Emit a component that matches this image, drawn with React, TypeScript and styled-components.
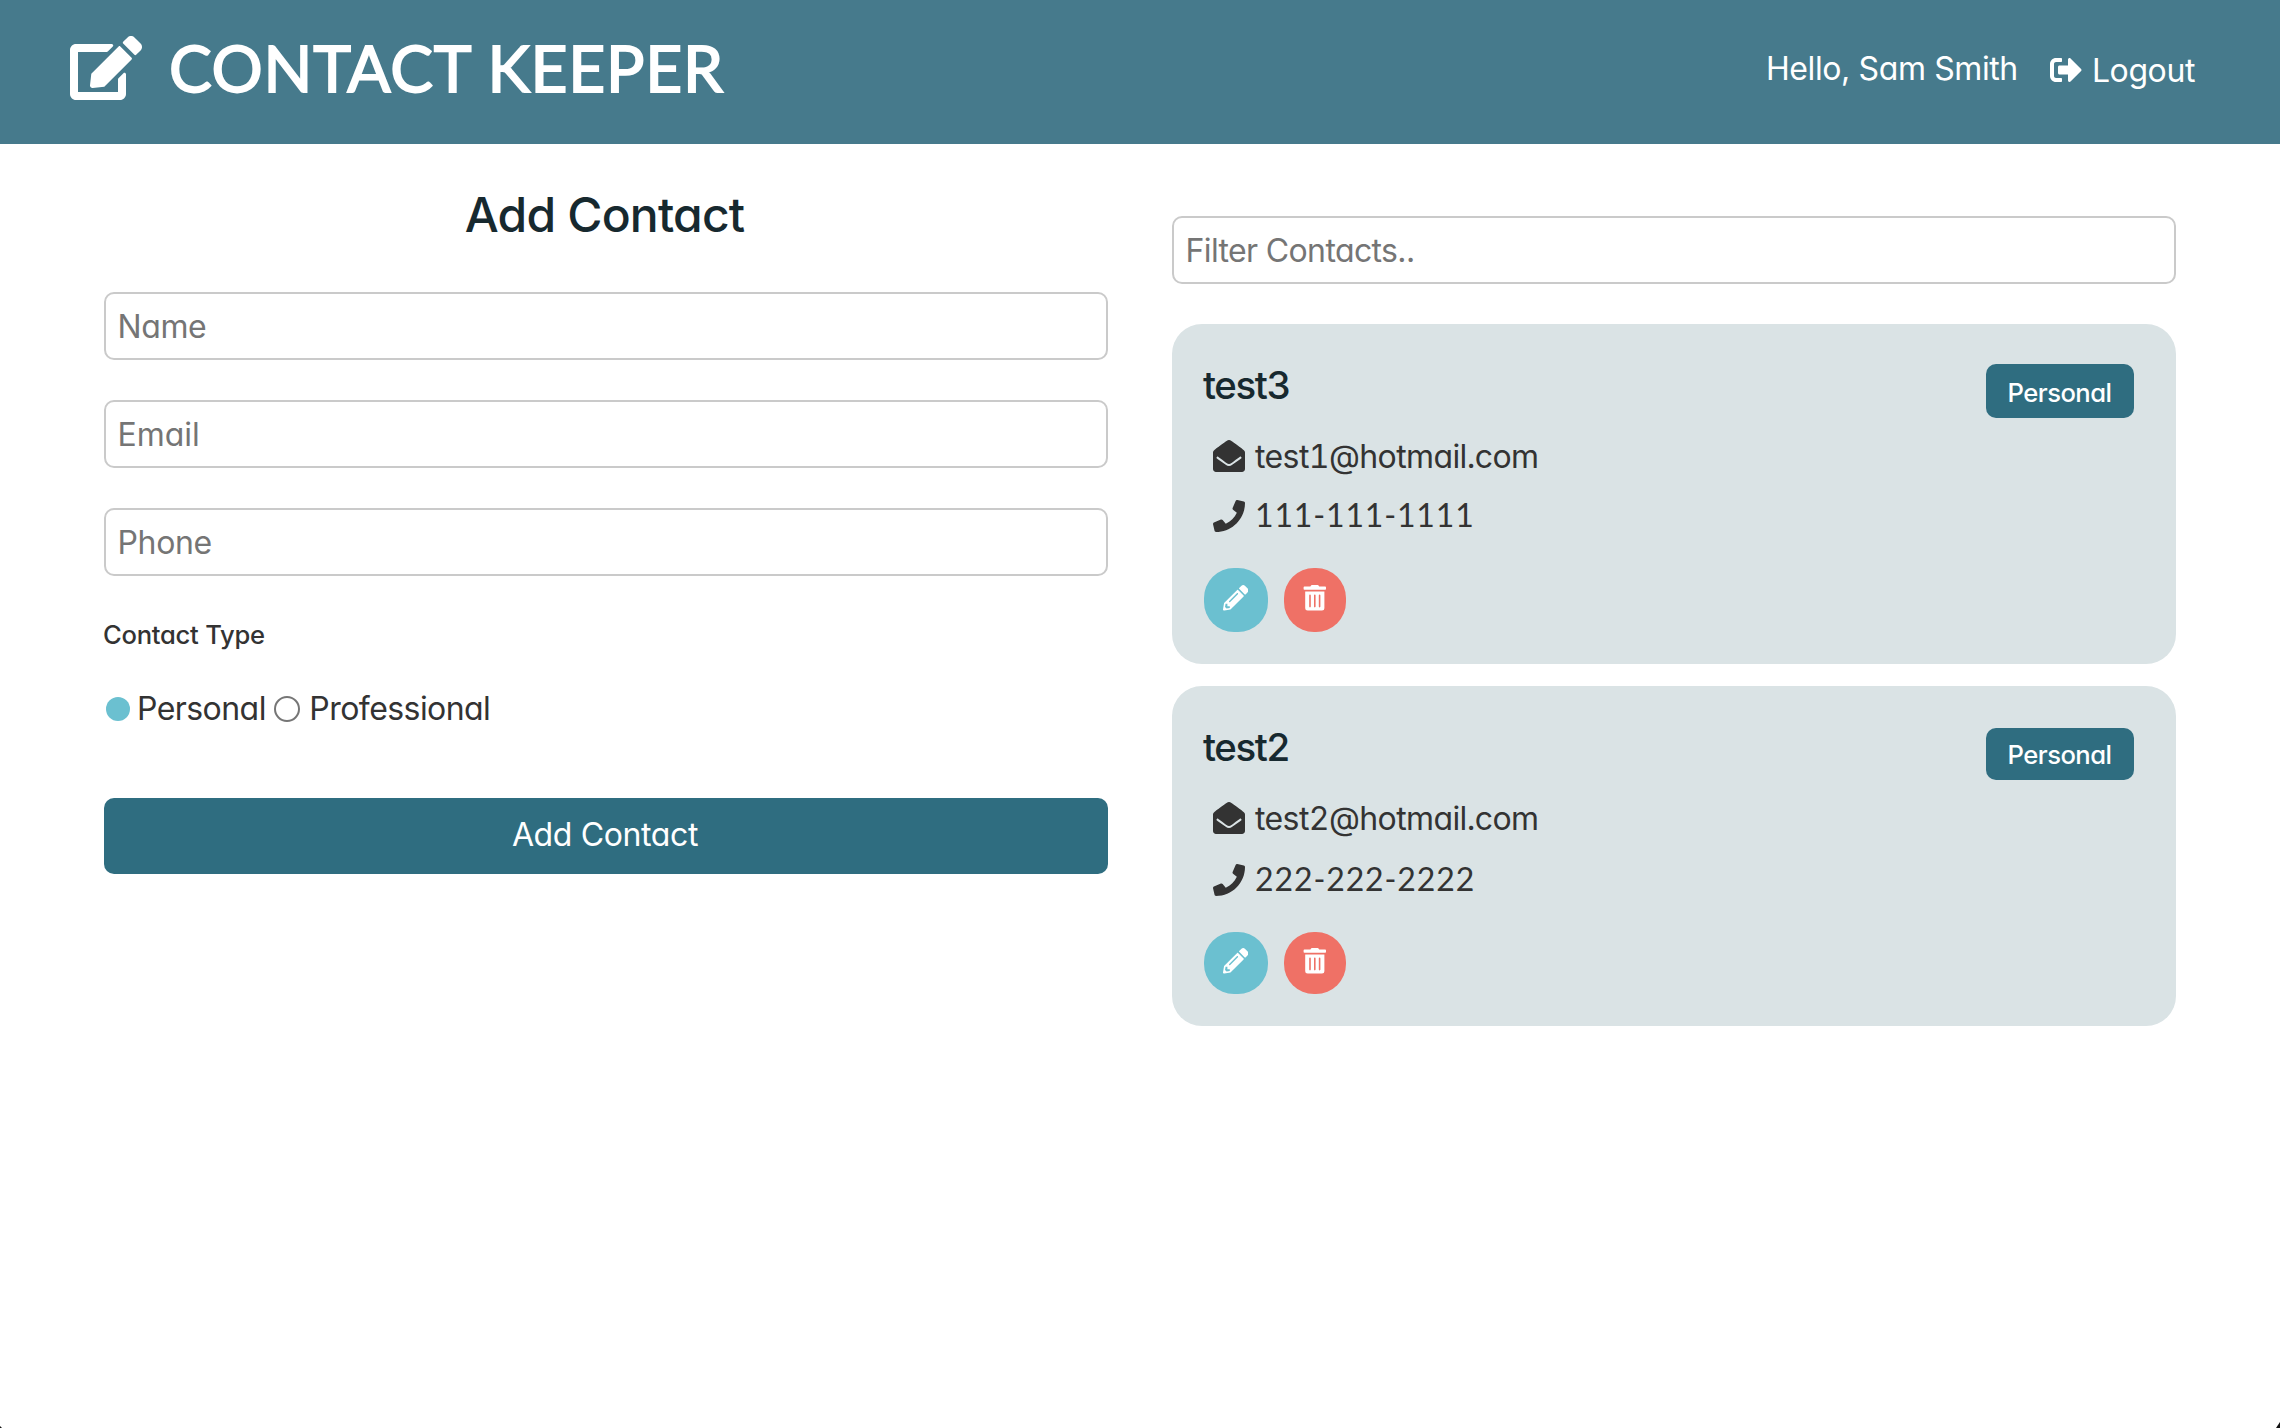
import React from "react";
import styled, { createGlobalStyle } from "styled-components";
import {
  FaEdit,
  FaSignOutAlt,
  FaEnvelopeOpen,
  FaPhone,
  FaPencilAlt,
  FaTrashAlt,
} from "react-icons/fa";

const colors = {
  header: "#467a8c",
  primary: "#2f6d80",
  card: "#dae3e5",
  info: "#6bc0d0",
  danger: "#ef7166",
  heading: "#17292f",
  text: "#333333",
};

const GlobalStyle = createGlobalStyle`
  *, *::before, *::after { box-sizing: border-box; margin: 0; padding: 0; }
  html, body { background: #fff; }
  body {
    font-family: "Inter", sans-serif;
    font-feature-settings: "cv11", "kern";
    font-size: 32px;
    color: ${colors.text};
    overflow: hidden;
  }
  svg { display: block; flex: none; }
`;

const Page = styled.div`
  position: relative;
  height: 1428px;
`;

const Header = styled.header`
  display: flex;
  align-items: flex-start;
  justify-content: space-between;
  height: 144px;
  padding: 0 85px 0 70px;
  background: ${colors.header};
  color: #fff;
`;

const Brand = styled.div`
  display: flex;
  align-items: flex-start;
  gap: 27px;

  svg {
    width: 72px;
    height: 64px;
    margin-top: 36px;
  }
`;

const Title = styled.h1`
  font-family: "Lato", sans-serif;
  font-size: 64px;
  font-weight: 400;
  line-height: 136px;
  letter-spacing: 0.75px;
  -webkit-text-stroke: 1.8px #fff;
  white-space: nowrap;
`;

const Nav = styled.nav`
  display: flex;
  align-items: flex-start;
  gap: 32px;
`;

const Greeting = styled.span`
  line-height: 137px;
  letter-spacing: -0.39px;
`;

const LogoutLink = styled.a`
  display: flex;
  align-items: flex-start;
  gap: 10px;
  line-height: 142px;
  letter-spacing: -0.4px;

  svg {
    width: 32px;
    height: 32px;
    margin-top: 54px;
  }
`;

const Main = styled.main`
  display: grid;
  grid-template-columns: 1fr 1fr;
  gap: 64px;
  padding: 0 104px;
  align-items: start;
`;

const Form = styled.form`
  display: flex;
  flex-direction: column;
  padding-top: 43px;
`;

const FormTitle = styled.h2`
  margin-bottom: 49px;
  padding-right: 3px;
  font-size: 48px;
  font-weight: 500;
  line-height: 56px;
  letter-spacing: -0.8px;
  text-align: center;
  color: ${colors.heading};
`;

const Fields = styled.div`
  display: flex;
  flex-direction: column;
  gap: 40px;
`;

const Field = styled.input<{ $tracking: number }>`
  display: block;
  width: 100%;
  height: 68px;
  padding: 0 11.5px;
  border: 2px solid #cacaca;
  border-radius: 10px;
  background: #fff;
  font: inherit;
  font-feature-settings: inherit;
  letter-spacing: ${(p) => p.$tracking}px;
  outline: none;

  &::placeholder {
    color: #757575;
    opacity: 1;
  }
`;

const GroupLabel = styled.h5`
  margin: 39px 0 0 -1px;
  font-size: 25.6px;
  font-weight: 500;
  line-height: 40px;
  letter-spacing: -0.26px;
`;

const Radios = styled.div`
  display: flex;
  align-items: center;
  height: 50px;
  margin: 29px 0 64px;
  padding-left: 2px;
`;

const RadioMark = styled.span<{ $checked?: boolean }>`
  flex: none;
  width: ${(p) => (p.$checked ? 24 : 26)}px;
  height: ${(p) => (p.$checked ? 24 : 26)}px;
  border: ${(p) => (p.$checked ? "none" : "2px solid #767676")};
  border-radius: 50%;
  background: ${(p) => (p.$checked ? colors.info : "#fff")};
`;

const RadioOption = styled.label`
  display: flex;
  align-items: center;
  gap: 7px;
  line-height: 50px;
  letter-spacing: -0.56px;

  & + & {
    gap: 9px;
    margin-left: 8.5px;
  }
`;

const Submit = styled.button`
  height: 76px;
  padding: 0 2px 3px 0;
  border: 0;
  border-radius: 10px;
  background: ${colors.primary};
  color: #fff;
  font: inherit;
  font-feature-settings: inherit;
  letter-spacing: -0.37px;
`;

const Contacts = styled.section`
  display: flex;
  flex-direction: column;
  padding-top: 72px;
`;

const CardList = styled.div`
  display: flex;
  flex-direction: column;
  gap: 22px;
  margin-top: 40px;
`;

const Card = styled.article`
  height: 340px;
  padding: 40px 42px 0 30px;
  border-radius: 30px;
  background: ${colors.card};
`;

const CardHead = styled.div`
  display: flex;
  align-items: flex-start;
  justify-content: space-between;
  height: 72px;
`;

const ContactName = styled.h3`
  padding-left: 1px;
  font-size: 38.4px;
  font-weight: 500;
  line-height: 43px;
  letter-spacing: -1.37px;
  color: ${colors.heading};
`;

const Badge = styled.span<{ $offset: number }>`
  width: 148px;
  height: ${(p) => 54 - p.$offset}px;
  margin-top: ${(p) => p.$offset}px;
  padding-right: 1px;
  border-radius: 10px;
  background: ${colors.primary};
  color: #fff;
  font-size: 25.6px;
  font-weight: 500;
  line-height: ${(p) => 57 - 1.5 * p.$offset}px;
  letter-spacing: -0.53px;
  text-align: center;
`;

const Detail = styled.div<{ $gap?: number }>`
  display: flex;
  align-items: center;
  gap: 10px;
  height: 40px;
  margin-top: ${(p) => p.$gap ?? 0}px;
  padding-left: 11px;
  line-height: 40px;

  svg {
    width: 32px;
    height: 32px;
  }
`;

const Email = styled.span`
  padding-top: 1px;
  font-feature-settings: "cv11", "kern", "tnum";
  letter-spacing: -0.6px;
`;

const Phone = styled.span<{ $tracking: number }>`
  padding-bottom: 2px;
  font-family: "Lato", sans-serif;
  letter-spacing: ${(p) => p.$tracking}px;
`;

const Actions = styled.div`
  display: flex;
  gap: 16px;
  margin: 32px 0 0 2px;
`;

const RoundButton = styled.button<{ $tone: string; $width: number; $height: number }>`
  display: flex;
  align-items: center;
  justify-content: center;
  width: ${(p) => p.$width}px;
  height: ${(p) => p.$height}px;
  padding: 0 1px 4px 0;
  border: 0;
  border-radius: 30px;
  background: ${(p) => p.$tone};
  color: #fff;

  svg {
    width: 25.6px;
    height: 25.6px;
  }
`;

const WindowCorner = styled.span<{ $side: "left" | "right"; $w: number; $h: number }>`
  position: absolute;
  bottom: 0;
  ${(p) => p.$side}: 0;
  width: ${(p) => p.$w}px;
  height: ${(p) => p.$h}px;
  background: #111;
  clip-path: ${(p) =>
    p.$side === "left" ? "polygon(0 0, 100% 100%, 0 100%)" : "polygon(100% 0, 100% 100%, 0 100%)"};
`;

const contacts = [
  { name: "test3", email: "test1@hotmail.com", phone: "111-111-1111", tracking: 0.85, offset: 0 },
  { name: "test2", email: "test2@hotmail.com", phone: "222-222-2222", tracking: 0.9, offset: 2 },
];

export default function App() {
  return (
    <Page>
      <GlobalStyle />
      <Header>
        <Brand>
          <FaEdit />
          <Title>CONTACT KEEPER</Title>
        </Brand>
        <Nav>
          <Greeting>Hello, Sam Smith</Greeting>
          <LogoutLink>
            <FaSignOutAlt />
            <span>Logout</span>
          </LogoutLink>
        </Nav>
      </Header>
      <Main>
        <Form>
          <FormTitle>Add Contact</FormTitle>
          <Fields>
            <Field placeholder="Name" $tracking={-0.4} />
            <Field placeholder="Email" $tracking={0} />
            <Field placeholder="Phone" $tracking={-0.35} />
          </Fields>
          <GroupLabel>Contact Type</GroupLabel>
          <Radios>
            <RadioOption>
              <RadioMark $checked />
              Personal
            </RadioOption>
            <RadioOption>
              <RadioMark />
              Professional
            </RadioOption>
          </Radios>
          <Submit type="button">Add Contact</Submit>
        </Form>
        <Contacts>
          <Field placeholder="Filter Contacts.." $tracking={-0.63} />
          <CardList>
            {contacts.map((c) => (
              <Card key={c.name}>
                <CardHead>
                  <ContactName>{c.name}</ContactName>
                  <Badge $offset={c.offset}>Personal</Badge>
                </CardHead>
                <Detail>
                  <FaEnvelopeOpen />
                  <Email>{c.email}</Email>
                </Detail>
                <Detail $gap={20 + c.offset}>
                  <FaPhone />
                  <Phone $tracking={c.tracking}>{c.phone}</Phone>
                </Detail>
                <Actions>
                  <RoundButton $tone={colors.info} $width={64} $height={64 - c.offset}>
                    <FaPencilAlt />
                  </RoundButton>
                  <RoundButton $tone={colors.danger} $width={62} $height={64 - c.offset}>
                    <FaTrashAlt />
                  </RoundButton>
                </Actions>
              </Card>
            ))}
          </CardList>
        </Contacts>
      </Main>
      <WindowCorner $side="left" $w={2} $h={2} />
      <WindowCorner $side="right" $w={4} $h={6} />
    </Page>
  );
}
